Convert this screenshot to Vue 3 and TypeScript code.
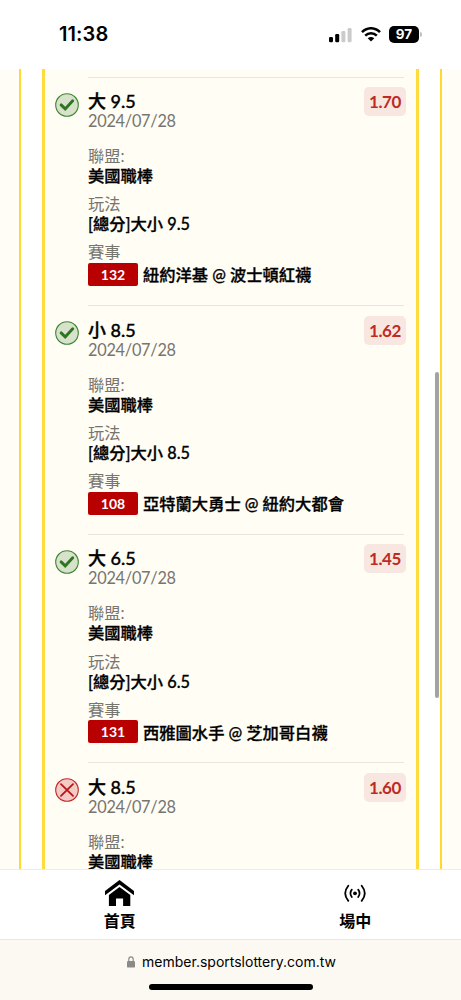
<script setup lang="ts">
interface Bet {
  pick: string
  date: string
  odds: string
  won: boolean
  league: string
  market: string
  code: string
  match: string
}

const bets: Bet[] = [
  { pick: '大 9.5', date: '2024/07/28', odds: '1.70', won: true, league: '美國職棒', market: '[總分]大小 9.5', code: '132', match: '紐約洋基 @ 波士頓紅襪' },
  { pick: '小 8.5', date: '2024/07/28', odds: '1.62', won: true, league: '美國職棒', market: '[總分]大小 8.5', code: '108', match: '亞特蘭大勇士 @ 紐約大都會' },
  { pick: '大 6.5', date: '2024/07/28', odds: '1.45', won: true, league: '美國職棒', market: '[總分]大小 6.5', code: '131', match: '西雅圖水手 @ 芝加哥白襪' },
  { pick: '大 8.5', date: '2024/07/28', odds: '1.60', won: false, league: '美國職棒', market: '', code: '', match: '' },
]
</script>

<template>
  <div class="phone">
    <header class="status">
      <span class="time">11:38</span>
      <div class="indicators">
        <svg class="signal" width="24" height="16" viewBox="0 0 24 16">
          <rect x="0" y="10" width="4" height="5.3" rx="1.2" />
          <rect x="6.2" y="7" width="4" height="8.3" rx="1.2" />
          <rect x="12.4" y="4" width="4" height="11.3" rx="1.2" fill="#cbcbcb" />
          <rect x="18.6" y="1" width="4" height="14.3" rx="1.2" fill="#cbcbcb" />
        </svg>
        <svg class="wifi" width="20" height="15" viewBox="0 0 20 15">
          <g fill="none" stroke="#000" stroke-width="2.5">
            <path d="M1 5.2C6-.1 14-.1 19 5.2" />
            <path d="M4.2 8.7c3.3-3.3 8.3-3.3 11.6 0" />
          </g>
          <path d="M6.7 11.2q3.3-2.6 6.6 0L10 14.6z" />
        </svg>
        <span class="battery">97</span>
        <i class="cap"></i>
      </div>
    </header>

    <main class="page">
      <div class="side left"></div>
      <section class="card">
        <article v-for="bet in bets" :key="bet.code" class="bet">
          <div class="mark">
            <svg v-if="bet.won" width="24" height="24" viewBox="0 0 24 24">
              <circle cx="12" cy="12" r="11.3" fill="#d7e2cb" stroke="#3f8534" stroke-width="1.1" />
              <path d="M6.1 11.9l4.1 4 7.5-8.2" fill="none" stroke="#2f7420" stroke-width="2.9" stroke-linecap="round" />
            </svg>
            <svg v-else width="24" height="24" viewBox="0 0 24 24">
              <circle cx="12" cy="12" r="11.3" fill="#f3cbc5" stroke="#c3262a" stroke-width="1.1" />
              <path d="M6 6.2L18 17.8M18 6.2L6 17.8" fill="none" stroke="#bd1318" stroke-width="1.8" stroke-linecap="round" />
            </svg>
          </div>
          <div class="info">
            <span class="odds">{{ bet.odds }}</span>
            <h2 class="pick">{{ bet.pick }}</h2>
            <p class="date">{{ bet.date }}</p>
            <dl>
              <dt>聯盟:</dt>
              <dd>{{ bet.league }}</dd>
              <template v-if="bet.market">
                <dt>玩法</dt>
                <dd>{{ bet.market }}</dd>
                <dt>賽事</dt>
                <dd class="event"><span class="code">{{ bet.code }}</span><span class="match">{{ bet.match }}</span></dd>
              </template>
            </dl>
          </div>
        </article>
      </section>
      <div class="side right"></div>
      <i class="thumb"></i>
    </main>

    <nav class="tabs">
      <a class="tab">
        <svg width="29" height="26" viewBox="0 0 29 26">
          <path d="M14.5 0L29 11v4.2L14.5 4.4 0 15.2V11z" />
          <path d="M14.5 6.9L25.3 15v11h-7.2v-7.4H11V26H3.9V15z" />
        </svg>
        <span>首頁</span>
      </a>
      <a class="tab">
        <svg width="22" height="26" viewBox="0 0 22 26">
          <circle cx="11" cy="13.3" r="1.9" />
          <g fill="none" stroke="#000" stroke-width="1.8" stroke-linecap="round">
            <path d="M7.8 9.6q-2.8 3.7 0 7.4M14.2 9.6q2.8 3.7 0 7.4" />
            <path d="M4.3 5.7q-6.2 7.6 0 15.2M17.7 5.7q6.2 7.6 0 15.2" />
          </g>
        </svg>
        <span>場中</span>
      </a>
    </nav>

    <footer class="address">
      <div class="url">
        <svg width="8" height="12" viewBox="0 0 8 12">
          <path d="M1.8 6V3.4a2.2 2.5 0 0 1 4.4 0V6" fill="none" stroke="#8b8a89" stroke-width="1.2" />
          <rect x="0" y="5" width="8" height="6.6" rx="1.2" fill="#8b8a89" />
        </svg>
        <span>member.sportslottery.com.tw</span>
      </div>
      <i class="home-bar"></i>
    </footer>
  </div>
</template>

<style>
body {
  margin: 0;
  background: #fff;
}
</style>

<style scoped>
.phone {
  width: 461px;
  height: 1000px;
  overflow: hidden;
  display: flex;
  flex-direction: column;
  background: #fff;
  color: #000;
  font-family: Lato, "Noto Sans CJK TC", sans-serif;
}
.status {
  height: 69px;
  flex: none;
  display: flex;
  justify-content: space-between;
  box-sizing: border-box;
  padding: 23px 39px 0 59px;
}
.time {
  font: 600 20px/23px Inter, sans-serif;
  letter-spacing: 0.1px;
}
.indicators {
  display: flex;
  align-items: center;
  height: 23px;
}
.signal {
  margin-right: 8px;
}
.wifi {
  margin-right: 8px;
}
.battery {
  width: 30px;
  height: 17px;
  border-radius: 5px;
  background: #000;
  color: #fff;
  font: 700 13.5px/17px Inter, sans-serif;
  text-align: center;
}
.cap {
  width: 2px;
  height: 5px;
  margin-left: 1px;
  border-radius: 0 2px 2px 0;
  background: #c0c0c0;
}
.page {
  position: relative;
  height: 800px;
  flex: none;
  display: flex;
  justify-content: space-between;
  overflow: hidden;
}
.side {
  width: 21px;
  box-sizing: border-box;
  background: #fffdf5;
}
.left {
  border-right: 2px solid #ffd92f;
}
.right {
  border-left: 2px solid #ffd92f;
}
.card {
  width: 377px;
  box-sizing: border-box;
  padding: 7.5px 12px 0 10px;
  border: solid #ffdc3c;
  border-width: 0 3px;
  background: #fffdf4;
}
.bet {
  display: flex;
  height: 228.67px;
}
.mark {
  width: 33px;
  padding-top: 16px;
  flex: none;
}
.mark svg {
  display: block;
}
.info {
  position: relative;
  flex: 1;
  border-top: 1.5px solid #e8e5df;
}
.odds {
  position: absolute;
  top: 9.4px;
  right: -2px;
  width: 42px;
  height: 29px;
  border-radius: 5px;
  background: #f8e7e0;
  color: #bf2b23;
  font-size: 17px;
  font-weight: 700;
  letter-spacing: -0.35px;
  line-height: 30px;
  text-align: center;
}
.pick {
  margin: 13.6px 0 0;
  font-size: 18px;
  font-weight: 500;
  line-height: 20px;
  -webkit-text-stroke: 0.35px #000;
}
.date {
  margin: 0;
  font-size: 16.3px;
  letter-spacing: -0.25px;
  line-height: 20px;
  color: #777570;
}
dl {
  margin: 15px 0 0;
  font-size: 16.3px;
  line-height: 20px;
}
dt {
  color: #777570;
  font-weight: 400;
}
dd {
  margin: 0 0 8.2px;
  font-weight: 500;
  white-space: nowrap;
  -webkit-text-stroke: 0.3px #000;
}
.event {
  display: flex;
  align-items: center;
  gap: 5px;
}
.match {
  padding-top: 2px;
}
.code {
  width: 50px;
  height: 23px;
  margin-top: 0.6px;
  border-radius: 2px;
  background: #b90000;
  color: #fff;
  font-size: 14px;
  font-weight: 700;
  line-height: 23px;
  text-align: center;
  -webkit-text-stroke: 0;
}
.thumb {
  position: absolute;
  left: 435px;
  top: 303px;
  width: 4px;
  height: 326px;
  border-radius: 2px;
  background: #a3a3a3;
}
.tabs {
  height: 71px;
  flex: none;
  box-sizing: border-box;
  border-top: 1px solid #ececea;
  border-bottom: 1px solid #e9e8e5;
  display: flex;
  padding: 10px 0 0 2px;
}
.tab {
  flex: 0 0 235.5px;
  display: flex;
  flex-direction: column;
  align-items: center;
  font-size: 16px;
  font-weight: 700;
  line-height: 22px;
  gap: 4px;
}
.address {
  flex: 1;
  display: flex;
  flex-direction: column;
  align-items: center;
  background: #fcf9f3;
}
.url {
  display: flex;
  align-items: center;
  gap: 7px;
  height: 44px;
  padding-left: 2px;
  font: 400 14px/20px Inter, sans-serif;
}
.home-bar {
  width: 164px;
  height: 6px;
  border-radius: 3px;
  background: #000;
}
</style>
